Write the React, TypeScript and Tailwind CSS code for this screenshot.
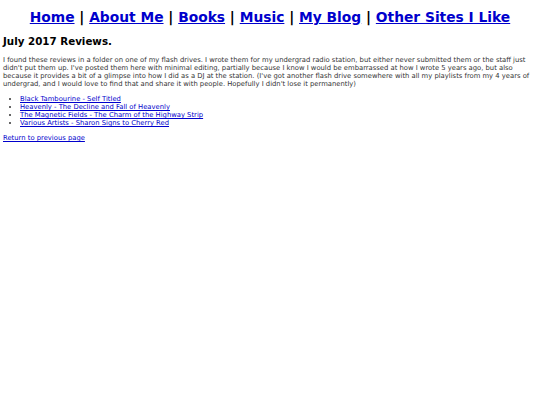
export default function App() {
  const links = ['Home', 'About Me', 'Books', 'Music', 'My Blog', 'Other Sites I Like'];
  const reviews = [
    'Black Tambourine - Self Titled',
    'Heavenly - The Decline and Fall of Heavenly',
    'The Magnetic Fields - The Charm of the Highway Strip',
    'Various Artists - Sharon Signs to Cherry Red',
  ];

  return (
    <div className="min-h-[405px] bg-white px-[3px] pt-[9px] font-['DejaVu_Sans',sans-serif] text-[#333]">
      {/* Nav */}
      <div className="text-center text-[13.8px] font-bold leading-[17px] text-black">
        {links.map((l, i) => (
          <span key={l}>
            {i > 0 && <span> | </span>}
            <a href="#" className="text-[#0000cc] underline">{l}</a>
          </span>
        ))}
      </div>

      <h1 className="mt-[9px] text-[10.3px] font-bold leading-[13px] text-black">July 2017 Reviews.</h1>

      <p className="mt-[8px] text-[6.8px] leading-[8px]">
        I found these reviews in a folder on one of my flash drives. I wrote them for my undergrad radio station, but either never submitted them or the staff just didn't put them up. I've posted them here with minimal editing, partially because I know I would be embarrassed at how I wrote 5 years ago, but also because it provides a bit of a glimpse into how I did as a DJ at the station. (I've got another flash drive somewhere with all my playlists from my 4 years of undergrad, and I would love to find that and share it with people. Hopefully I didn't lose it permanently)
      </p>

      <ul className="mt-[7px] list-disc pl-[17px] text-[6.8px] leading-[8px]">
        {reviews.map((r) => (
          <li key={r}>
            <a href="#" className="text-[#0000cc] underline">{r}</a>
          </li>
        ))}
      </ul>

      <p className="mt-[7px] text-[6.8px] leading-[8px]">
        <a href="#" className="text-[#0000cc] underline">Return to previous page</a>
      </p>
    </div>
  );
}
